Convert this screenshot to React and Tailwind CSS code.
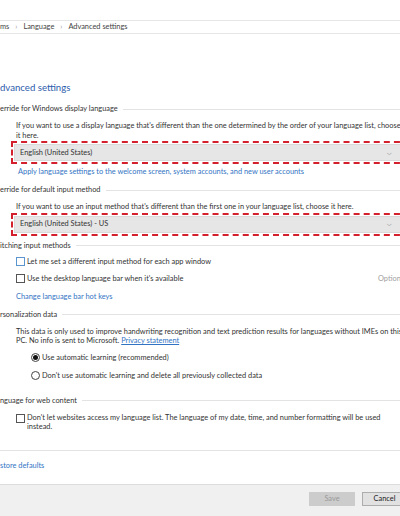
import React from "react";

const SectionHeader = ({ title, className = "" }) => (
  <div className={"h-[10px] flex items-center shrink-0 " + className}>
    <span className="whitespace-nowrap">{title}</span>
    <div className="flex-1 h-px bg-[#e3e3e3] ml-[5px]" />
  </div>
);

const Dropdown = ({ value, className = "" }) => (
  <div className={"ml-[11px] -mr-[10px] border-2 border-dashed border-[#d4202c] p-px shrink-0 " + className}>
    <div className="h-[17px] bg-[#e6e6e6] border border-[#d9d9d9] flex items-center pl-[5px] pr-[14px] justify-between">
      <span>{value}</span>
      <span className="text-[6px] text-[#555]">⌵</span>
    </div>
  </div>
);

const Checkbox = ({ blue }) => (
  <span
    className={
      "w-[9px] h-[9px] border bg-white shrink-0 " +
      (blue ? "border-[#5b95d0]" : "border-[#555]")
    }
  />
);

const Radio = ({ checked }) => (
  <span className="w-[9px] h-[9px] rounded-full border border-[#444] bg-white shrink-0 flex items-center justify-center">
    {checked && <span className="w-[5px] h-[5px] rounded-full bg-[#111]" />}
  </span>
);

export default function App() {
  return (
    <div className="w-[400px] h-[516px] overflow-hidden bg-white flex flex-col text-[#333] font-['Lato',sans-serif] text-[7.4px] leading-[9.5px]">
      {/* top strip + breadcrumb */}
      <div className="h-[20px] shrink-0" />
      <div className="h-[14px] shrink-0 border-y border-[#e6e6e6] flex items-center gap-[6px] text-[#444]">
        <span>ms</span>
        <span className="text-[#999]">›</span>
        <span>Language</span>
        <span className="text-[#999]">›</span>
        <span>Advanced settings</span>
      </div>

      <div className="h-[46px] shrink-0" />
      <div className="h-[16px] shrink-0 flex items-center text-[9.6px] text-[#2c5cab]">dvanced settings</div>

      {/* display language */}
      <SectionHeader title="erride for Windows display language" className="mt-[8px]" />
      <p className="mt-[7px] ml-[16px] whitespace-nowrap">
        If you want to use a display language that's different than the one determined by the order of your language list, choose
        <br />
        it here.
      </p>
      <Dropdown value="English (United States)" className="mt-[1px]" />
      <div className="h-[10px] flex items-center mt-[3px] ml-[18px] text-[#3274c4] shrink-0">
        Apply language settings to the welcome screen, system accounts, and new user accounts
      </div>

      {/* input method */}
      <SectionHeader title="erride for default input method" className="mt-[8px]" />
      <p className="mt-[7px] ml-[16px]">
        If you want to use an input method that's different than the first one in your language list, choose it here.
      </p>
      <Dropdown value="English (United States) - US" className="mt-[1px]" />

      {/* switching */}
      <SectionHeader title="itching input methods" className="mt-[5px]" />
      <div className="h-[10px] mt-[6px] ml-[16px] flex items-center gap-[2px] shrink-0">
        <Checkbox blue />
        <span>Let me set a different input method for each app window</span>
      </div>
      <div className="h-[10px] mt-[7px] ml-[16px] flex items-center gap-[2px] shrink-0">
        <Checkbox />
        <span>Use the desktop language bar when it's available</span>
        <span className="ml-auto -mr-[4px] text-[#a0a0a0]">Options</span>
      </div>
      <div className="h-[10px] mt-[8px] ml-[16px] flex items-center text-[#3274c4] shrink-0">Change language bar hot keys</div>

      {/* personalization */}
      <SectionHeader title="rsonalization data" className="mt-[8px]" />
      <p className="mt-[7px] ml-[16px] whitespace-nowrap">
        This data is only used to improve handwriting recognition and text prediction results for languages without IMEs on this
        <br />
        PC. No info is sent to Microsoft.{" "}
        <span className="text-[#3274c4] underline">Privacy statement</span>
      </p>
      <div className="h-[10px] mt-[7px] ml-[31px] flex items-center gap-[2px] shrink-0">
        <Radio checked />
        <span>Use automatic learning (recommended)</span>
      </div>
      <div className="h-[10px] mt-[8px] ml-[31px] flex items-center gap-[2px] shrink-0">
        <Radio />
        <span>Don't use automatic learning and delete all previously collected data</span>
      </div>

      {/* web content */}
      <SectionHeader title="nguage for web content" className="mt-[15px]" />
      <div className="mt-[7px] ml-[16px] flex items-start gap-[2px] shrink-0">
        <span className="mt-[1px] flex">
          <Checkbox />
        </span>
        <span className="whitespace-nowrap">
          Don't let websites access my language list. The language of my date, time, and number formatting will be used
          <br />
          instead.
        </span>
      </div>

      <div className="h-px bg-[#e3e3e3] mt-[18px] shrink-0" />
      <div className="h-[10px] mt-[10px] flex items-center text-[#3274c4] shrink-0">store defaults</div>

      {/* footer */}
      <div className="mt-auto h-[32px] shrink-0 bg-[#f0f0f0] border-t border-[#dcdcdc] flex justify-end items-start pt-[7px] gap-[7px] -mr-[7px]">
        <div className="w-[46px] h-[14px] bg-[#cccccc] text-[#9a9a9a] flex items-center justify-center">Save</div>
        <div className="w-[45px] h-[14px] bg-[#e1e1e1] border border-[#adadad] text-[#222] flex items-center justify-center">Cancel</div>
      </div>
    </div>
  );
}
